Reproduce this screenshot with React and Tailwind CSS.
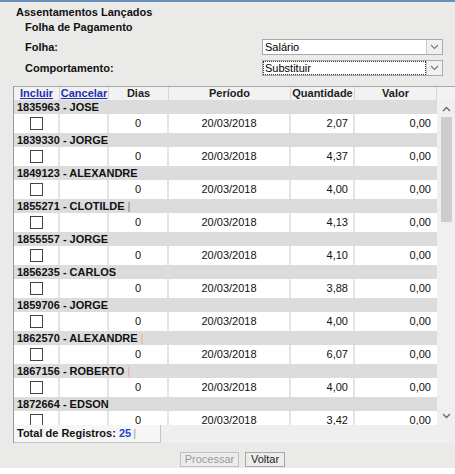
import React from "react";

const rows = [
  { id: "1835963 - JOSE", q: "2,07" },
  { id: "1839330 - JORGE", q: "4,37" },
  { id: "1849123 - ALEXANDRE", q: "4,00" },
  { id: "1855271 - CLOTILDE", q: "4,13", bar: "#777" },
  { id: "1855557 - JORGE", q: "4,10", bar: "#ddd" },
  { id: "1856235 - CARLOS", q: "3,88" },
  { id: "1859706 - JORGE", q: "4,00" },
  { id: "1862570 - ALEXANDRE", q: "6,07", bar: "#e8b070" },
  { id: "1867156 - ROBERTO", q: "4,00", bar: "#e8a0a0" },
  { id: "1872664 - EDSON", q: "3,42" },
];

function Chevron({ up }) {
  return (
    <svg width="9" height="6" viewBox="0 0 9 6">
      <path d={up ? "M1 5 L4.5 1.5 L8 5" : "M1 1 L4.5 4.5 L8 1"} fill="none" stroke="#666" strokeWidth="1.3" />
    </svg>
  );
}

function Select({ value, focused }) {
  return (
    <div className="flex h-[16px] w-[181px] border border-[#a9a9a9] bg-white">
      <div className={"flex flex-1 items-center pl-[2px] text-[11px] text-black " + (focused ? "outline-1 outline-dotted outline-[#333] -outline-offset-1" : "")}>
        {value}
      </div>
      <div className="flex w-[16px] items-center justify-center border-l border-[#c8c8c8] bg-[#f1f1f1]">
        <svg width="9" height="6" viewBox="0 0 9 6">
          <path d="M1 1 L4.5 4.5 L8 1" fill="none" stroke="#777" strokeWidth="1.1" />
        </svg>
      </div>
    </div>
  );
}

const cols = "grid grid-cols-[46px_49px_60px_122px_64px_82px]";

export default function App() {
  return (
    <div className="h-[474px] w-[455px] bg-white" style={{ fontFamily: '"Liberation Sans", Arial, sans-serif' }}>
      <div className="flex h-[468px] flex-col border-t-2 border-[#6a8fbb] bg-[#eaeae8]">
        <div className="pl-[16px] pt-[3px] text-[11px] font-bold leading-[14px] text-[#111]">Assentamentos Lançados</div>
        <div className="pl-[25px] pt-[1px] text-[11px] font-bold leading-[14px] text-[#111]">Folha de Pagamento</div>
        <div className="mt-[5px] flex items-center pl-[25px] pr-[12px]">
          <span className="text-[11px] font-bold text-[#111]">Folha:</span>
          <div className="ml-auto"><Select value="Salário" /></div>
        </div>
        <div className="mt-[4px] flex items-center pl-[25px] pr-[12px]">
          <span className="text-[11px] font-bold text-[#111]">Comportamento:</span>
          <div className="ml-auto"><Select value="Substituir" focused /></div>
        </div>

        <div className="ml-[13px] mt-[10px] border-l border-[#9a9a9a] bg-[#efefef]">
          {/* header */}
          <div className="flex h-[14px] border-t border-[#a8a8a8] bg-[#f2f2f2] text-[11px] font-bold leading-[13px]">
            <div className={cols}>
              <div className="border-r border-[#d4d4d4] text-center text-[#1d2fb0] underline">Incluir</div>
              <div className="border-r border-[#d4d4d4] text-center text-[#1d2fb0] underline">Cancelar</div>
              <div className="border-r border-[#d4d4d4] text-center text-[#222]">Dias</div>
              <div className="border-r border-[#d4d4d4] text-center text-[#222]">Período</div>
              <div className="border-r border-[#d4d4d4] text-center text-[#222]">Quantidade</div>
              <div className="border-r border-[#d4d4d4] text-center text-[#222]">Valor</div>
            </div>
            <div className="flex-1" />
          </div>
          {/* body */}
          <div className="flex h-[325px] overflow-hidden">
            <div className="w-[423px]">
              {rows.map((r) => (
                <div key={r.id}>
                  <div className="flex h-[14px] items-center bg-[#dcdcdc] pl-[3px] text-[11px] font-bold text-[#111]">
                    {r.id}
                    {r.bar && <span className="ml-[3px] font-normal" style={{ color: r.bar }}>|</span>}
                  </div>
                  <div className={cols + " h-[19px] text-[11px] text-[#111]"}>
                    <div className="flex items-center justify-center border-r-2 border-[#e4e4e4] bg-white">
                      <div className="h-[13px] w-[13px] border border-[#444] bg-white" />
                    </div>
                    <div className="border-r-2 border-[#e4e4e4] bg-white" />
                    <div className="flex items-center justify-center border-r-2 border-[#e4e4e4] bg-white">0</div>
                    <div className="flex items-center justify-center border-r-2 border-[#e4e4e4] bg-white">20/03/2018</div>
                    <div className="flex items-center justify-end border-r-2 border-[#e4e4e4] bg-white pr-[5px]">{r.q}</div>
                    <div className="flex items-center justify-end bg-white pr-[6px]">0,00</div>
                  </div>
                </div>
              ))}
            </div>
            {/* scrollbar */}
            <div className="flex flex-1 flex-col items-center bg-[#f0f0f0]">
              <div className="mt-[6px] h-[8px]"><Chevron up /></div>
              <div className="mt-[3px] h-[105px] w-[11px] bg-[#cdcdcd]" />
              <div className="mt-auto mb-[4px] h-[8px]"><Chevron /></div>
            </div>
          </div>
          {/* footer */}
          <div className="flex h-[18px]">
            <div className="flex w-[147px] items-center border-r border-b border-[#c4c4c4] bg-[#f6f6f6] pl-[3px] text-[11px] font-bold text-[#111]">
              Total de Registros:&nbsp;<span className="text-[#2b3fd0]">25</span>
              <span className="ml-[2px] font-normal text-[#999]">|</span>
            </div>
          </div>
        </div>

        <div className="mt-[9px] flex justify-center gap-[6px] pl-[10px]">
          <div className="flex h-[15px] w-[59px] items-center justify-center border border-[#c0c0c0] bg-[#ececec] text-[11px] text-[#9a9a9a]">Processar</div>
          <div className="flex h-[15px] w-[40px] items-center justify-center border border-[#a8a8a8] bg-[#ececec] text-[11px] text-[#222]">Voltar</div>
        </div>
      </div>
    </div>
  );
}
